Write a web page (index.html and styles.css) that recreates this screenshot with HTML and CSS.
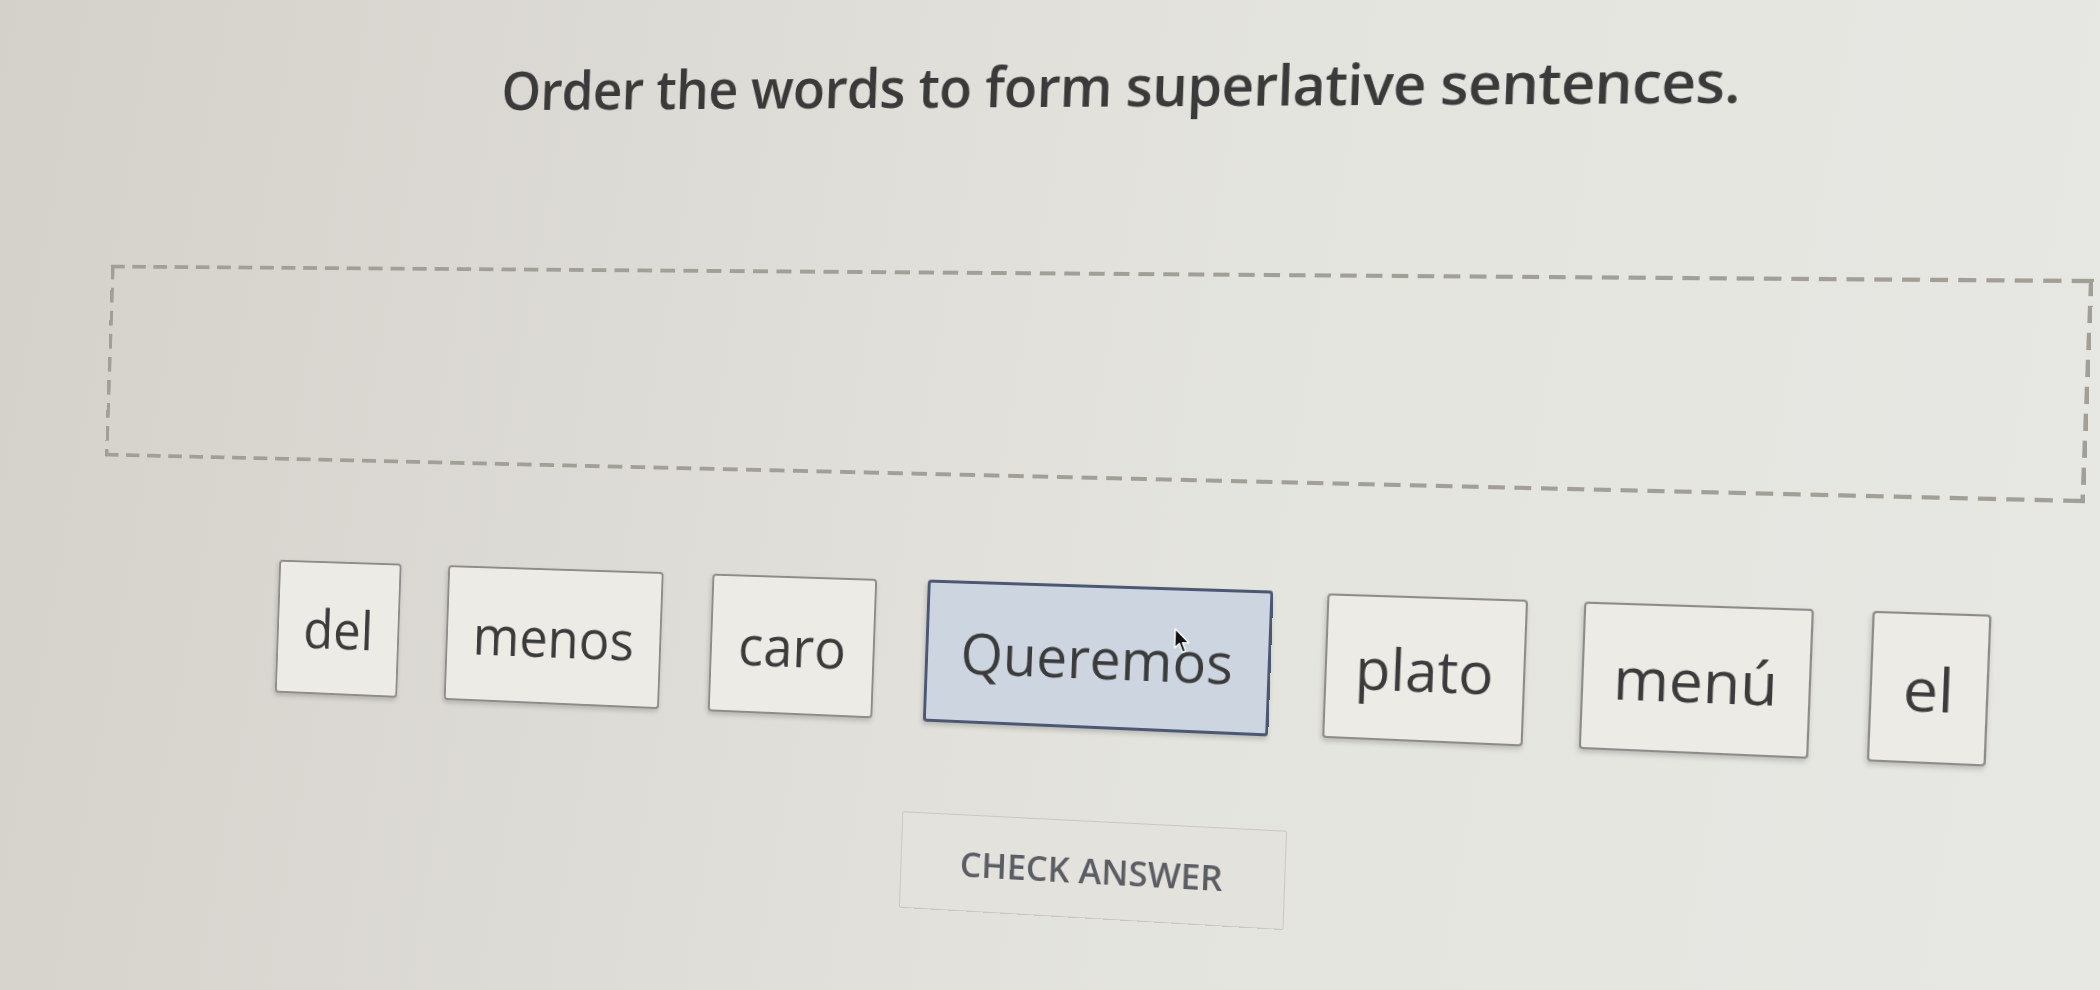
FILE: index.html
```html
<!doctype html>
<html lang="en">
    <head>
        <meta charset="utf-8">
        <title>Order the words</title>
        <link rel="stylesheet" href="styles.css">
    </head>
    <body>
        <!-- the photo is taken at an angle, so the page is tilted a little -->
        <div class="page">
            <h1 class="title">Order the words to form superlative sentences.</h1>

            <div class="dropZone"></div>

            <div class="wordBank">
                <div class="word">del</div>
                <div class="word">menos</div>
                <div class="word">caro</div>
                <div class="word wordActive">Queremos
                    <svg class="cursor" width="18" height="26" viewBox="0 0 18 26">
                        <path d="M1 1 L1 20 L5.5 15.5 L9 24 L12 22.8 L8.6 14.6 L15 14.6 Z" fill="#111" stroke="#fff" stroke-width="1.4" stroke-linejoin="round"/>
                    </svg>
                </div>
                <div class="word">plato</div>
                <div class="word">menú</div>
                <div class="word">el</div>
            </div>

            <div class="actions">
                <button class="btnCheck">CHECK ANSWER</button>
            </div>
        </div>
    </body>
</html>
```

FILE: styles.css
```css
* {
    box-sizing: border-box;
}

body {
    margin: 0;
    height: 990px;
    overflow: hidden;
    font-family: "Open Sans", "Noto Sans", sans-serif;
    color: #3b3b3b;
    background: linear-gradient(100deg, #d4d1ca 0%, #dcdad4 28%, #e4e4de 58%, #e7e8e3 100%);
}

.page {
    width: 2019px;
    transform-origin: 1097px 650px;
    transform: perspective(2000px) rotateY(-9deg) rotate(2.1deg);
}

.title {
    margin: 0;
    padding: 47px 0 0 121px;
    font-size: 56px;
    font-weight: 600;
    line-height: 76px;
    text-align: center;
    color: #3a3a3a;
    letter-spacing: -0.6px;
}

.dropZone {
    margin-top: 149px;
    height: 208px;
    background:
        repeating-linear-gradient(90deg, #a29f99 0 16px, transparent 16px 25px) left top / 100% 4px no-repeat,
        repeating-linear-gradient(90deg, #a29f99 0 16px, transparent 16px 25px) left bottom / 100% 4px no-repeat,
        repeating-linear-gradient(180deg, #a29f99 0 16px, transparent 16px 25px) left top / 4px 100% no-repeat,
        repeating-linear-gradient(180deg, #a29f99 0 16px, transparent 16px 25px) right top / 4px 100% no-repeat;
}

.wordBank {
    display: flex;
    justify-content: center;
    align-items: center;
    gap: 53px;
    margin-top: 105px;
    padding-left: 131px;
}

.word {
    position: relative;
    padding: 32px 28px;
    font-size: 56px;
    line-height: 74px;
    background: #ecebe6;
    border: 2px solid #8d8c88;
    border-radius: 4px;
    box-shadow: -1px 3px 5px rgba(0, 0, 0, 0.18);
    color: #3b3b3b;
}

.wordActive {
    padding: 32px 34px;
    background: #ccd5e0;
    border: 3px solid #4b5874;
}

.cursor {
    position: absolute;
    left: 250px;
    top: 37px;
}

.actions {
    display: flex;
    justify-content: center;
    margin-top: 92px;
    padding-left: 177px;
}

.btnCheck {
    width: 390px;
    height: 98px;
    font-family: "Open Sans", "Noto Sans", sans-serif;
    font-size: 35px;
    font-weight: 600;
    color: #5b5d64;
    background: #e4e2dc;
    border: 1px solid #c9c7c1;
    border-radius: 2px;
}
```
